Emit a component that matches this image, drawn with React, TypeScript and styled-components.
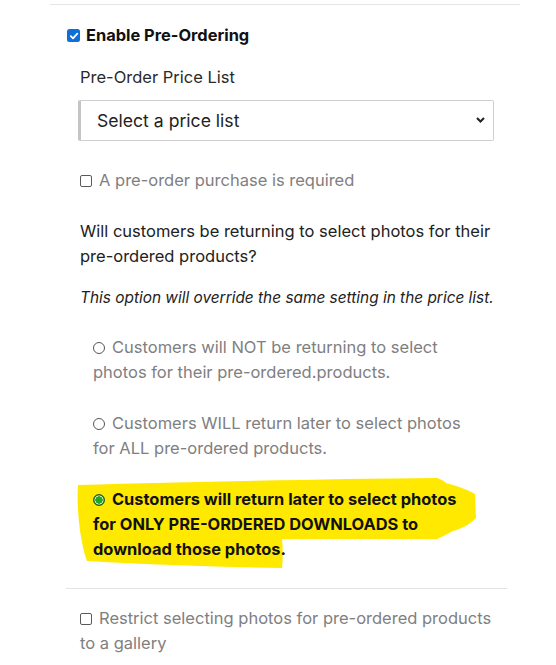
import React from "react";
import styled, { createGlobalStyle } from "styled-components";

const GlobalStyle = createGlobalStyle`
  html, body { margin: 0; padding: 0; background: #ffffff; }
  body { font-family: Inter, "Noto Sans", "Liberation Sans", sans-serif; color: #222; }
`;

const Page = styled.div`
  padding: 4px 0 0 50px;
`;

const Section = styled.section`
  width: 470px;
  border-top: 1px solid #e6e6e6;
  padding: 18px 0 20px 17px;
  box-sizing: border-box;
`;

const EnableRow = styled.label`
  display: flex;
  align-items: center;
  gap: 6px;
  font-size: 16.4px;
  line-height: 25px;
  font-weight: 700;
  color: #111;
`;

const Body = styled.div`
  padding-left: 13px;
  width: 414px;
  font-size: 16.5px;
  line-height: 25px;
`;

const Label = styled.div`
  margin-top: 17px;
  color: #2a2a2a;
`;

const SelectBox = styled.div`
  margin: 10px 0 0 -2px;
  width: 416px;
  height: 41px;
  box-sizing: border-box;
  border: 1px solid #cfcfcf;
  border-left: 3px solid #c4c4c4;
  border-radius: 2px;
  display: flex;
  align-items: center;
  justify-content: space-between;
  padding: 0 8px 1px 16px;
  font-size: 17.6px;
  color: #222;
`;

const CheckRow = styled.div<{ $top: number }>`
  margin-top: ${(p) => p.$top}px;
  color: #808080;
`;

const Question = styled.p`
  margin: 26px 0 0;
  color: #222;
`;

const Note = styled.p`
  margin: 16px 0 0;
  font-style: italic;
  font-size: 15.4px;
  white-space: nowrap;
  color: #222;
`;

const RadioList = styled.div`
  margin: 25px 20px 0 13px;
  display: flex;
  flex-direction: column;
  gap: 26px;
`;

const RadioOption = styled.div<{ $selected?: boolean }>`
  position: relative;
  color: ${(p) => (p.$selected ? "#111" : "#808080")};
  font-weight: ${(p) => (p.$selected ? 700 : 400)};
  font-size: ${(p) => (p.$selected ? "16.4px" : "16.5px")};
`;

const OptionText = styled.span`
  position: relative;
  z-index: 1;
`;

const Highlight = styled.svg`
  position: absolute;
  left: -20px;
  top: -12px;
  width: 420px;
  height: 100px;
  z-index: 0;
`;

const RadioDot = styled.span<{ $checked?: boolean }>`
  display: inline-block;
  width: 12px;
  height: 12px;
  box-sizing: border-box;
  border-radius: 50%;
  margin-right: 7px;
  vertical-align: -1px;
  border: 1px solid ${(p) => (p.$checked ? "#1f5e1f" : "#555")};
  background: ${(p) =>
    p.$checked
      ? "radial-gradient(circle, #22a722 0 3px, #1a8a1a 3.4px, #b9e8b0 3.8px, #b9e8b0 4.3px, #1f5e1f 5px)"
      : "#fff"};
`;

const Box = styled.span`
  display: inline-block;
  width: 12px;
  height: 12px;
  box-sizing: border-box;
  border: 1px solid #5a5a5a;
  border-radius: 2px;
  margin-right: 7px;
  vertical-align: -1px;
  background: #fff;
`;

const CheckedBox = styled.span`
  display: inline-flex;
  align-items: center;
  justify-content: center;
  width: 13px;
  height: 13px;
  border-radius: 2.5px;
  background: #0f6fd6;
`;

const Divider = styled.hr`
  margin: 26px 0 0 -14px;
  width: 441px;
  border: 0;
  border-top: 1px solid #e3e3e3;
`;

export default function App() {
  return (
    <>
      <GlobalStyle />
      <Page>
        <Section>
          <EnableRow>
            <CheckedBox>
              <svg width="10" height="10" viewBox="0 0 10 10">
                <path d="M1.8 5.2 L4 7.3 L8.3 2.6" fill="none" stroke="#fff" strokeWidth="1.8" strokeLinecap="round" strokeLinejoin="round" />
              </svg>
            </CheckedBox>
            Enable Pre-Ordering
          </EnableRow>
          <Body>
            <Label>Pre-Order Price List</Label>
            <SelectBox>
              <span>Select a price list</span>
              <svg width="9" height="6" viewBox="0 0 9 6">
                <path d="M1 1 L4.5 4.5 L8 1" fill="none" stroke="#222" strokeWidth="2" />
              </svg>
            </SelectBox>
            <CheckRow $top={27}>
              <Box />A pre-order purchase is required
            </CheckRow>
            <Question>Will customers be returning to select photos for their pre-ordered products?</Question>
            <Note>This option will override the same setting in the price list.</Note>
            <RadioList>
              <RadioOption>
                <RadioDot />
                Customers will NOT be returning to select photos for their pre-ordered.products.
              </RadioOption>
              <RadioOption>
                <RadioDot />
                Customers WILL return later to select photos for ALL pre-ordered products.
              </RadioOption>
              <RadioOption $selected>
                <Highlight viewBox="0 0 420 100">
                  <path
                    d="M5 10 C120 7 250 4 364 3 C368 4 371 6 373 8 C385 11 395 15 402 19 L403 43 C396 50 388 54 380 56 C374 59 369 62 364 64 L209 64 C210 74 210 84 209 93 C150 92 80 90 14 86 C10 76 9 66 7 56 C5 40 4 25 5 10 Z"
                    fill="#ffe900"
                  />
                </Highlight>
                <OptionText>
                  <RadioDot $checked />
                  Customers will return later to select photos for ONLY PRE-ORDERED DOWNLOADS to download those photos.
                </OptionText>
              </RadioOption>
            </RadioList>
            <Divider />
            <CheckRow $top={17}>
              <Box />Restrict selecting photos for pre-ordered products to a gallery
            </CheckRow>
          </Body>
        </Section>
      </Page>
    </>
  );
}
